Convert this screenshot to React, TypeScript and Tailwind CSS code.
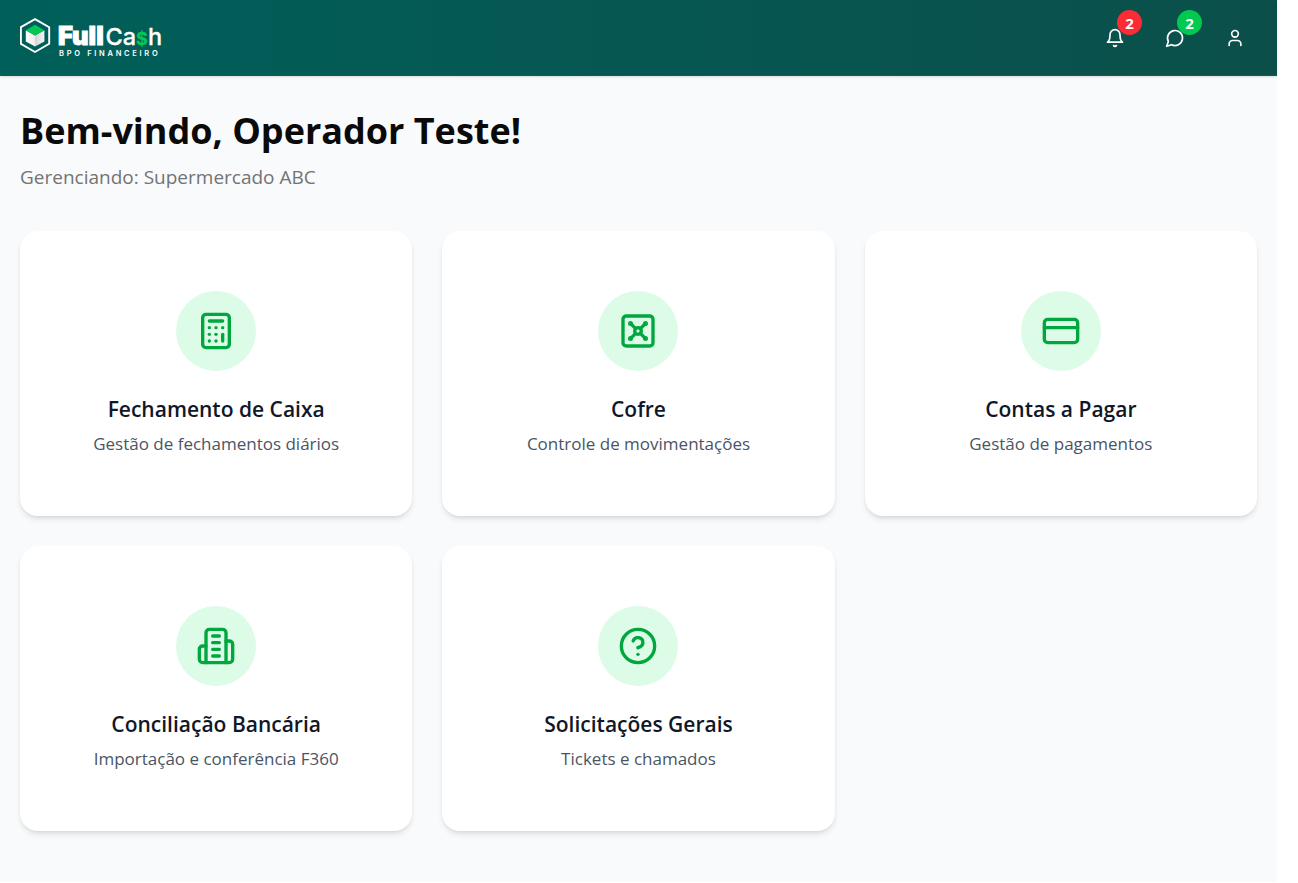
import { Calculator, CircleHelp, CreditCard, User, Vault } from "lucide-react";
import type { ReactNode } from "react";

function BuildingIcon() {
  return (
    <svg viewBox="0 0 24 24" className="size-10" fill="none" stroke="currentColor" strokeWidth="2" strokeLinecap="round" strokeLinejoin="round" aria-hidden="true">
      <path d="M6 22V4a2 2 0 0 1 2-2h8a2 2 0 0 1 2 2v18Z" />
      <path d="M6 12H4a2 2 0 0 0-2 2v6a2 2 0 0 0 2 2h2" />
      <path d="M18 9h2a2 2 0 0 1 2 2v9a2 2 0 0 1-2 2h-2" />
      <path d="M10 6h4M10 10h4M10 14h4M10 18h4" />
    </svg>
  );
}

function BellIcon() {
  return (
    <svg viewBox="0 0 24 24" className="size-5" fill="none" stroke="currentColor" strokeWidth="2" strokeLinecap="round" strokeLinejoin="round" aria-hidden="true">
      <path d="M6 8a6 6 0 0 1 12 0c0 7 3 9 3 9H3s3-2 3-9" />
      <path d="M10.3 21a1.94 1.94 0 0 0 3.4 0" />
    </svg>
  );
}

function ChatIcon() {
  return (
    <svg viewBox="0 0 24 24" className="size-5" fill="none" stroke="currentColor" strokeWidth="2" strokeLinecap="round" strokeLinejoin="round" aria-hidden="true">
      <path d="M7.9 20A9 9 0 1 0 4 16.1L2 22Z" />
    </svg>
  );
}

function Logo() {
  return (
    <a href="#" aria-label="FullCash BPO Financeiro" className="block">
      <svg viewBox="0 0 144 40" className="h-10 w-36" aria-hidden="true">
        <defs>
          <linearGradient id="left" x1="0" y1="0" x2="1" y2="0">
            <stop offset="0" stopColor="#ffffff" />
            <stop offset="1" stopColor="#eeeeee" />
          </linearGradient>
          <linearGradient id="right" x1="0" y1="0" x2="1" y2="0">
            <stop offset="0" stopColor="#d4d4d4" />
            <stop offset="1" stopColor="#f4f4f4" />
          </linearGradient>
        </defs>
        <path d="M15 1.2 29.2 9.2V25.8L15 34 .9 25.8V9.2Z" fill="none" stroke="#fff" strokeWidth="1.9" />
        <path d="M5.8 12.2 15 17.5V28.6L5.8 23.4Z" fill="url(#left)" />
        <path d="M24.4 12.2 15 17.5V28.6L24.4 23.4Z" fill="url(#right)" />
        <path d="M15 6.8 24.4 12.2 15 17.5 5.8 12.2Z" fill="#05c753" />
        <text x="38" y="26.5" fontFamily="Inter, sans-serif" fontSize="25.5" fontWeight="900" fill="#fff" stroke="#fff" strokeWidth="1">Full</text>
        <text x="85.5" y="26.5" fontFamily="Inter, sans-serif" fontSize="23.5" fontWeight="500" fill="#fff" stroke="#fff" strokeWidth="0.3">
          Ca<tspan fill="#05c753" stroke="#05c753" fontWeight="700" fontSize="18">$</tspan>h
        </text>
        <text x="39" y="38" fontFamily="Inter, sans-serif" fontSize="7.5" fontWeight="600" letterSpacing="2.7" fill="#fff">BPO FINANCEIRO</text>
      </svg>
    </a>
  );
}

const cards: { title: string; text: string; icon: ReactNode }[] = [
  { title: "Fechamento de Caixa", text: "Gestão de fechamentos diários", icon: <Calculator className="size-10" /> },
  { title: "Cofre", text: "Controle de movimentações", icon: <Vault className="size-10" /> },
  { title: "Contas a Pagar", text: "Gestão de pagamentos", icon: <CreditCard className="size-10" /> },
  { title: "Conciliação Bancária", text: "Importação e conferência F360", icon: <BuildingIcon /> },
  { title: "Solicitações Gerais", text: "Tickets e chamados", icon: <CircleHelp className="size-10" /> },
];

function HeaderButton({ label, badge, badgeClass, children }: { label: string; badge?: number; badgeClass?: string; children: ReactNode }) {
  return (
    <button type="button" aria-label={label} className="relative flex h-10 w-11 items-center justify-center rounded-lg text-white">
      {children}
      {badge !== undefined && (
        <span className={`absolute -top-2 -right-[5px] flex size-[25px] items-center justify-center rounded-full pt-px text-[15px] leading-5 font-bold ${badgeClass}`}>
          {badge}
        </span>
      )}
    </button>
  );
}

export default function App() {
  return (
    <div className="bg-white pr-[21px] pb-px font-['Open_Sans','Noto_Sans',sans-serif]">
      <div className="min-h-[calc(100vh-1px)] bg-[#f9fafb]">
        <header className="flex h-[76px] items-center justify-between border-b border-[#0b5f57] bg-linear-to-r from-[#005f5a] to-[#0b4f4a] px-5 shadow-sm">
          <Logo />
          <nav className="flex gap-4" aria-label="Atalhos">
            <HeaderButton label="Notificações" badge={2} badgeClass="bg-[#fb2c36]">
              <BellIcon />
            </HeaderButton>
            <HeaderButton label="Mensagens" badge={2} badgeClass="bg-[#00c950]">
              <ChatIcon />
            </HeaderButton>
            <HeaderButton label="Perfil">
              <User className="size-5" />
            </HeaderButton>
          </nav>
        </header>
        <main className="px-5 pt-8">
          <h1 className="text-[36px] leading-[45px] font-bold text-neutral-950">Bem-vindo, Operador Teste!</h1>
          <p className="mt-2 text-[19px] leading-8 text-[#737373]">Gerenciando: Supermercado ABC</p>
          <div className="mt-[38px] grid grid-cols-3 gap-[30px]">
            {cards.map((card) => (
              <button key={card.title} type="button" className="flex flex-col items-center rounded-[18px] bg-white px-10 py-[60px] shadow-md">
                <span className="flex size-20 items-center justify-center rounded-full bg-[#dcfce7] text-[#00a63e]">{card.icon}</span>
                <span className="mt-5 text-[21px] leading-[37px] font-semibold text-[#101828]">{card.title}</span>
                <span className="mt-1 text-[17px] leading-6 text-[#4a5565]">{card.text}</span>
              </button>
            ))}
          </div>
        </main>
      </div>
    </div>
  );
}
